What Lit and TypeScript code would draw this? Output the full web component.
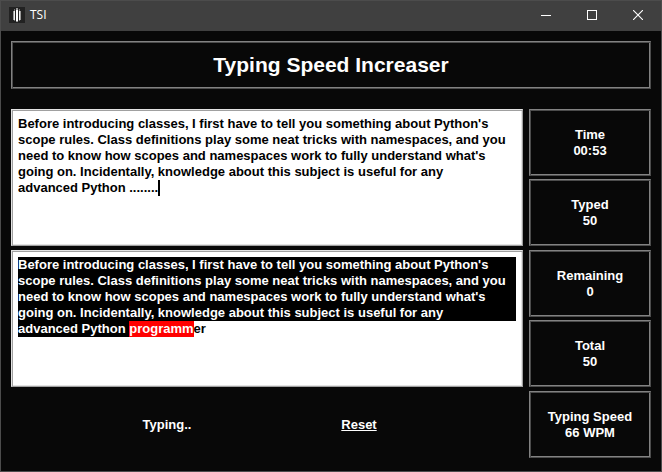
import { LitElement, html, css } from "lit";
import { customElement, property, state } from "lit/decorators.js";

const DONE_LINES = [
  "Before introducing classes, I first have to tell you something about Python's",
  "scope rules. Class definitions play some neat tricks with namespaces, and you",
  "need to know how scopes and namespaces work to fully understand what's",
  "going on. Incidentally, knowledge about this subject is useful for any",
];

@customElement("stat-box")
class StatBox extends LitElement {
  @property() label = "";
  @property() value = "";

  static styles = css`
    :host {
      box-sizing: border-box;
      display: flex;
      flex-direction: column;
      align-items: center;
      justify-content: center;
      min-height: 67px;
      border: 1px solid;
      border-color: #828282 #4c4c4c #4c4c4c #828282;
      box-shadow: inset 1px 1px 0 #4c4c4c, inset -1px -1px 0 #828282;
    }
  `;

  render() {
    return html`<span>${this.label}</span><output>${this.value}</output>`;
  }
}

@customElement("app-root")
class AppRoot extends LitElement {
  @state() typed = [...DONE_LINES, "advanced Python ........"].join("\n");

  static styles = css`
    :host {
      box-sizing: border-box;
      display: flex;
      flex-direction: column;
      min-height: 100vh;
      border: 1px solid #4c4c4c;
      background: #080808;
      color: #fff;
      font: bold 13px/16px "Liberation Sans", Arial, sans-serif;
    }
    .titlebar {
      display: flex;
      align-items: center;
      box-sizing: border-box;
      height: 30px;
      padding: 0 0 2px 8px;
      background: #404040;
    }
    .logo {
      display: block;
      width: 16px;
      height: 16px;
      margin-right: 5px;
    }
    .name {
      flex: 1;
      font: 12px/16px "Open Sans", "Noto Sans", sans-serif;
    }
    .control {
      display: flex;
      align-items: center;
      justify-content: center;
      width: 46px;
      height: 28px;
      padding: 0;
      border: 0;
      background: none;
      color: #fff;
    }
    main {
      display: flex;
      flex-direction: column;
      gap: 20px;
      padding: 10px;
    }
    h1 {
      margin: 0;
      padding: 11px;
      border: 1px solid;
      border-color: #828282 #4c4c4c #4c4c4c #828282;
      box-shadow: inset 1px 1px 0 #4c4c4c, inset -1px -1px 0 #828282;
      font-size: 21px;
      line-height: 24px;
      text-align: center;
    }
    .board {
      display: grid;
      grid-template-columns: 1fr 122px;
      gap: 4px 6px;
    }
    .pair {
      display: grid;
      gap: 3px;
    }
    .pane {
      display: grid;
      padding: 6px;
      border: 1px solid;
      border-color: #e3e3e3 #a0a0a0 #a0a0a0 #e3e3e3;
      box-shadow: inset 1px 1px 0 #a0a0a0, inset -1px -1px 0 #e3e3e3;
      background: #fff;
      color: #000;
    }
    .entry,
    .mirror {
      grid-area: 1 / 1;
      font: inherit;
      white-space: pre-wrap;
      overflow-wrap: break-word;
    }
    .entry {
      display: block;
      width: 100%;
      box-sizing: border-box;
      padding: 0;
      border: 0;
      outline: 0;
      resize: none;
      overflow: hidden;
      background: none;
      color: #000;
      caret-color: transparent;
    }
    .mirror {
      color: transparent;
      pointer-events: none;
      user-select: none;
    }
    .caret {
      display: inline-block;
      width: 2px;
      height: 16px;
      margin-right: -2px;
      background: #000;
      vertical-align: top;
    }
    .passage {
      align-self: start;
      margin: 0;
    }
    .line {
      display: block;
    }
    .done {
      background: #000;
      color: #fff;
    }
    .wrong {
      background: #f00;
      color: #fff;
    }
    .run {
      display: inline-block;
      white-space: pre;
      vertical-align: top;
    }
    .footer {
      display: grid;
      grid-template-columns: 1fr 1fr;
      align-items: center;
      justify-items: center;
      padding: 0 68px 0 60px;
    }
    .reset {
      padding: 0;
      border: 0;
      background: none;
      color: inherit;
      font: inherit;
      text-decoration: underline;
      cursor: pointer;
    }
  `;

  render() {
    return html`
      <header class="titlebar">
        <svg class="logo" viewBox="0 0 16 16" aria-hidden="true">
          <rect width="16" height="16" fill="#222" />
          <path d="M4 4h1v9H4zM11 4h1v9h-1z" fill="#999" />
          <path d="M5 2h1v2H5zM10 2h1v2h-1zM5 13h1v1H5zM10 13h1v1h-1z" fill="#777" />
          <path d="M5 4h1v9H5zM10 4h1v9h-1z" fill="#eee" />
          <path d="M7 3h2v11H7z" fill="#fff" />
          <path d="M7 1h2v2H7zM7 14h2v1H7z" fill="#999" />
        </svg>
        <span class="name">TSI</span>
        <button class="control" aria-label="Minimize">
          <svg width="10" height="10"><path d="M0 5.5h10" stroke="#fff" /></svg>
        </button>
        <button class="control" aria-label="Maximize">
          <svg width="10" height="10">
            <rect x=".5" y=".5" width="9" height="9" fill="none" stroke="#fff" />
          </svg>
        </button>
        <button class="control" aria-label="Close">
          <svg width="10" height="10"><path d="M0 0 10 10M10 0 0 10" stroke="#fff" stroke-width="1.1" /></svg>
        </button>
      </header>
      <main>
        <h1>Typing Speed Increaser</h1>
        <div class="board">
          <div class="pane">
            <div class="mirror" aria-hidden="true">${this.typed}<span class="caret"></span></div>
            <textarea
              class="entry"
              aria-label="Type here"
              spellcheck="false"
              .value=${this.typed}
              @input=${(e: Event) => (this.typed = (e.target as HTMLTextAreaElement).value)}
            ></textarea>
          </div>
          <div class="pair">
            <stat-box label="Time" value="00:53"></stat-box>
            <stat-box label="Typed" value="50"></stat-box>
          </div>
          <div class="pane">
            <p class="passage">
              ${DONE_LINES.map((line) => html`<span class="line done">${line}</span>`)}
              <span class="line"
                ><span class="run done">advanced Python </span><span class="run wrong">programm</span
                ><span class="run">er</span></span
              >
            </p>
          </div>
          <div class="pair">
            <stat-box label="Remaining" value="0"></stat-box>
            <stat-box label="Total" value="50"></stat-box>
          </div>
          <div class="footer">
            <span role="status">Typing..</span>
            <button class="reset" @click=${() => (this.typed = "")}>Reset</button>
          </div>
          <stat-box label="Typing Speed" value="66 WPM"></stat-box>
        </div>
      </main>
    `;
  }
}
